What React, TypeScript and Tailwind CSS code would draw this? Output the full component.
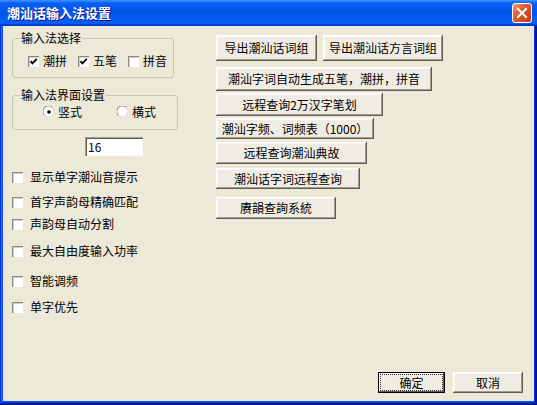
import React from "react";

const btn =
  "flex items-center justify-center whitespace-nowrap bg-[#efede3] text-[12px] leading-[14px] text-black shadow-[inset_-1px_-1px_0_#5f5d52,inset_1px_1px_0_#ffffff,inset_-2px_-2px_0_#a09d8c,inset_2px_2px_0_#f8f7f2]";

function Check({ checked = false }: { checked?: boolean }) {
  return (
    <span className="flex h-[11px] w-[11px] shrink-0 items-center justify-center bg-white shadow-[inset_1px_1px_0_#8c8a7c,inset_2px_2px_0_#d6d3c4]">
      {checked && (
        <svg width="11" height="11" viewBox="0 0 11 11">
          <polyline points="2.5,5.2 4.4,7.4 8.8,2.8" fill="none" stroke="#000" strokeWidth="1.8" />
        </svg>
      )}
    </span>
  );
}

function Radio({ checked = false }: { checked?: boolean }) {
  return (
    <svg width="12" height="12" viewBox="0 0 12 12" className="shrink-0">
      <circle cx="6" cy="6" r="5.5" fill="#fff" />
      <path d="M1.4 9.4 A5.2 5.2 0 0 1 9.4 1.4" fill="none" stroke="#7d7b6e" strokeWidth="1" />
      <path d="M9.4 1.4 A5.2 5.2 0 0 1 1.4 9.4" fill="none" stroke="#d4d1c2" strokeWidth="1" />
      {checked && <circle cx="6" cy="6" r="1.8" fill="#000" />}
    </svg>
  );
}

function Row({ label, mt }: { label: string; mt: string }) {
  return (
    <div className={`flex h-[14px] items-center ${mt}`}>
      <Check />
      <span className="ml-[7px] text-[12px] leading-[14px]">{label}</span>
    </div>
  );
}

export default function App() {
  return (
    <div className="flex h-[405px] w-[537px] flex-col bg-[#0855dd] font-['Noto_Sans_CJK_SC',sans-serif] text-black shadow-[inset_-1px_-1px_0_#00138c,inset_1px_1px_0_#0831d9,inset_-2px_-2px_0_#001ea0,inset_2px_2px_0_#166aee,inset_-3px_-3px_0_#003bda,inset_3px_3px_0_#0855dd]">
      {/* title bar */}
      <div className="flex h-[26px] shrink-0 items-center justify-between bg-[linear-gradient(to_bottom,#3d95ff_0%,#0a5ef2_12%,#0055e8_45%,#0660f5_85%,#0a5ef2_90%,#003dd7_94%,#003dd7_100%)] pl-[7px] pr-[5px]">
        <span className="text-[13px] font-bold leading-[16px] text-white [text-shadow:1px_1px_0_#0f1089]">
          潮汕话输入法设置
        </span>
        <div className="flex h-[20px] w-[20px] items-center justify-center rounded-[3px] border border-white bg-[linear-gradient(135deg,#f3a48a_0%,#e3603a_35%,#d2461a_70%,#c23b10_100%)]">
          <svg width="12" height="12" viewBox="0 0 12 12">
            <path d="M2 2 L10 10 M10 2 L2 10" stroke="#fff" strokeWidth="2" strokeLinecap="square" />
          </svg>
        </div>
      </div>

      {/* client area */}
      <div className="mx-[3px] mb-[4px] flex flex-1 flex-col bg-[#ece9d8] text-[12px] leading-[14px]">
        <div className="flex flex-1">
          {/* left column */}
          <div className="w-[213px] shrink-0 pl-[9px] pt-[5px]">
            <fieldset className="w-[162px] rounded-[3px] border border-[#c9c6b5] pb-[9px]">
              <legend className="ml-[7px] px-[1px] leading-[14px]">输入法选择</legend>
              <div className="mt-[9px] flex h-[14px] items-center pl-[15px]">
                <Check checked />
                <span className="ml-[4px]">潮拼</span>
                <span className="ml-[11px]">
                  <Check checked />
                </span>
                <span className="ml-[4px]">五笔</span>
                <span className="ml-[11px]">
                  <Check />
                </span>
                <span className="ml-[4px]">拼音</span>
              </div>
            </fieldset>

            <fieldset className="mt-[10px] w-[166px] rounded-[3px] border border-[#c9c6b5] pb-[10px]">
              <legend className="ml-[7px] px-[1px] leading-[14px]">输入法界面设置</legend>
              <div className="mt-[3px] flex h-[14px] items-center pl-[30px]">
                <Radio checked />
                <span className="ml-[3px]">竖式</span>
                <span className="ml-[35px] flex">
                  <Radio />
                </span>
                <span className="ml-[3px]">横式</span>
              </div>
            </fieldset>

            <div className="ml-[73px] mt-[7px] flex h-[19px] w-[58px] items-center bg-white pl-[3px] pt-[1px] shadow-[inset_1px_1px_0_#a3a192,inset_2px_2px_0_#5d5b50,inset_-1px_-1px_0_#fbfaf6]">
              16
            </div>

            <Row label="显示单字潮汕音提示" mt="mt-[14px]" />
            <Row label="首字声韵母精确匹配" mt="mt-[11px]" />
            <Row label="声韵母自动分割" mt="mt-[8px]" />
            <Row label="最大自由度输入功率" mt="mt-[13px]" />
            <Row label="智能调频" mt="mt-[16px]" />
            <Row label="单字优先" mt="mt-[12px]" />
          </div>

          {/* right column */}
          <div className="flex flex-col items-start pt-[9px]">
            <div className="flex gap-[6px]">
              <button className={`${btn} h-[26px] w-[101px]`}>导出潮汕话词组</button>
              <button className={`${btn} h-[26px] w-[120px]`}>导出潮汕话方言词组</button>
            </div>
            <button className={`${btn} mt-[6px] h-[24px] w-[216px]`}>潮汕字词自动生成五笔，潮拼，拼音</button>
            <button className={`${btn} mt-[2px] h-[23px] w-[167px]`}>远程查询2万汉字笔划</button>
            <button className={`${btn} mt-[2px] h-[21px] w-[158px]`}>潮汕字频、词频表（1000）</button>
            <button className={`${btn} mt-[3px] h-[22px] w-[151px]`}>远程查询潮汕典故</button>
            <button className={`${btn} mt-[4px] h-[21px] w-[144px]`}>潮汕话字词远程查询</button>
            <button className={`${btn} mt-[8px] h-[22px] w-[120px]`}>赓韻查詢系統</button>
          </div>
        </div>

        {/* bottom buttons */}
        <div className="flex justify-end gap-[8px] pb-[8px] pr-[11px]">
          <button className="flex h-[21px] w-[67px] items-center justify-center border border-black bg-[#efede3] p-[1px] shadow-[inset_-1px_-1px_0_#5f5d52,inset_1px_1px_0_#ffffff]">
            <span className="flex h-full w-full items-center justify-center border border-dotted border-[#333]">
              确定
            </span>
          </button>
          <button className={`${btn} h-[21px] w-[70px]`}>取消</button>
        </div>
      </div>
    </div>
  );
}
